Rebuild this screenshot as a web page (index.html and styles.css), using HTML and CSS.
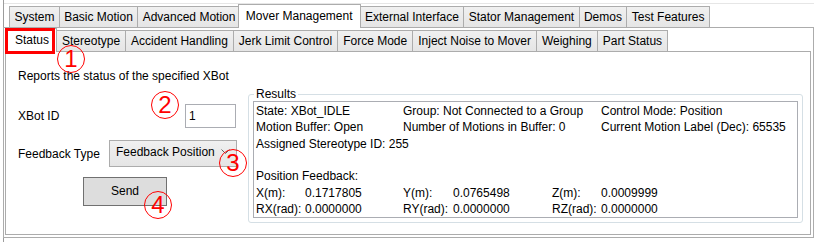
FILE: index.html
```html
<!DOCTYPE html>
<html lang="en">
<head>
  <meta charset="UTF-8" />
  <title>Mover Management - Status</title>
  <link rel="stylesheet" href="styles.css">
</head>
<body>
  <div class="frame">
    <div class="tabstrip main">
      <div class="tab">System</div>
      <div class="tab">Basic Motion</div>
      <div class="tab">Advanced Motion</div>
      <div class="tab active">Mover Management</div>
      <div class="tab">External Interface</div>
      <div class="tab">Stator Management</div>
      <div class="tab">Demos</div>
      <div class="tab">Test Features</div>
    </div>
    <div class="panel outer">
      <div class="tabstrip sub">
        <div class="tab active">Status</div>
        <div class="tab">Stereotype</div>
        <div class="tab">Accident Handling</div>
        <div class="tab">Jerk Limit Control</div>
        <div class="tab">Force Mode</div>
        <div class="tab">Inject Noise to Mover</div>
        <div class="tab">Weighing</div>
        <div class="tab">Part Status</div>
      </div>
      <div class="panel inner">
        <div class="controls">
          <div class="desc">Reports the status of the specified XBot</div>
          <div class="field id-row">
            <span>XBot ID</span>
            <div class="textbox">1</div>
          </div>
          <div class="field type-row">
            <span>Feedback Type</span>
            <div class="combo">
              <span>Feedback Position</span>
              <svg width="9" height="6" viewBox="0 0 9 6"><polyline points="0.5,0.5 4.5,4.5 8.5,0.5" fill="none" stroke="#606060" stroke-width="1"/></svg>
            </div>
          </div>
          <button class="send">Send</button>
        </div>
        <fieldset class="results">
          <legend>Results</legend>
          <div class="output">
            <div class="info">
              <span>State: XBot_IDLE</span>
              <span>Group: Not Connected to a Group</span>
              <span>Control Mode: Position</span>
              <span>Motion Buffer: Open</span>
              <span>Number of Motions in Buffer: 0</span>
              <span>Current Motion Label (Dec): 65535</span>
              <span>Assigned Stereotype ID: 255</span>
            </div>
            <div class="gap"></div>
            <div>Position Feedback:</div>
            <div class="coords">
              <span>X(m):</span><span>0.1717805</span>
              <span>Y(m):</span><span>0.0765498</span>
              <span>Z(m):</span><span>0.0009999</span>
              <span>RX(rad):</span><span>0.0000000</span>
              <span>RY(rad):</span><span>0.0000000</span>
              <span>RZ(rad):</span><span>0.0000000</span>
            </div>
          </div>
        </fieldset>
      </div>
    </div>

    <div class="highlight"></div>
    <div class="callout c1">1</div>
    <div class="callout c2">2</div>
    <div class="callout c3">3</div>
    <div class="callout c4">4</div>
  </div>
</body>
</html>
```

FILE: styles.css
```css
html, body {
  margin: 0;
  padding: 0;
  background: #fff;
  font-family: 'Liberation Sans', Arial, sans-serif;
  font-size: 12px;
  color: #000;
}
.frame {
  position: relative;
  width: 811px;
  height: 242px;
  margin-left: 3px;
  padding-top: 3px;
  box-sizing: border-box;
  border-left: 1px solid #9c9c9c;
}
.tabstrip {
  display: flex;
  align-items: flex-end;
  height: 23px;
  box-sizing: border-box;
}
.tabstrip.main {
  border-top: 1px solid #e6e6e6;
  padding-left: 5px;
  height: 24px;
}
.tabstrip.sub {
  padding-left: 4px;
}
.tab {
  height: 21px;
  line-height: 20px;
  padding: 0 5px;
  box-sizing: border-box;
  border: 1px solid #acacac;
  border-bottom: none;
  margin-right: -1px;
  background: linear-gradient(#f0f0f0, #e5e5e5);
  white-space: nowrap;
}
.main .tab {
  padding: 0 4.4px;
}
.tab.active,
.main .tab.active {
  position: relative;
  z-index: 2;
  height: 24px;
  line-height: 22px;
  margin: 0 -1px -1px -2px;
  padding: 0 7px;
  background: #fff;
}
.panel {
  border: 1px solid #acacac;
  box-sizing: border-box;
  background: #fff;
}
.panel.outer {
  width: 811px;
  height: 211px;
  margin-left: -1px;
  padding: 0 2px 2px 1px;
}
.panel.inner {
  display: flex;
  align-items: flex-start;
  width: 806px;
  height: 184px;
}
.controls {
  width: 242px;
  padding: 0 11px 0 12px;
  box-sizing: border-box;
}
.desc {
  margin-top: 16px;
  line-height: 16px;
}
.field {
  display: flex;
  align-items: center;
  justify-content: space-between;
}
.id-row {
  margin-top: 20px;
}
.type-row {
  margin-top: 12px;
}
.textbox {
  width: 51px;
  height: 24px;
  box-sizing: border-box;
  border: 1px solid #abadb3;
  padding: 3px 3px;
  margin-right: 1px;
  line-height: 16px;
}
.combo {
  display: flex;
  align-items: center;
  justify-content: space-between;
  width: 128px;
  height: 27px;
  box-sizing: border-box;
  border: 1px solid #acacac;
  background: linear-gradient(#f0f0f0, #e5e5e5);
  padding: 0 6px 4px 6px;
}
.send {
  display: block;
  width: 84px;
  height: 29px;
  margin: 10px 0 0 65px;
  border: 1px solid #707070;
  background: #dddddd;
  font-family: inherit;
  font-size: 12px;
  color: #000;
  padding: 0 0 2px 0;
}
.results {
  width: 555px;
  height: 136px;
  box-sizing: border-box;
  margin: 35px 0 0 0;
  padding: 0 4px 4px 4px;
  border: 1px solid #d5dfe5;
  border-radius: 3px;
}
.results legend {
  line-height: 14px;
  padding: 0 2px;
  margin-left: 1px;
}
.output {
  height: 117px;
  box-sizing: border-box;
  border: 1px solid #abadb3;
  padding: 1px 2px;
  line-height: 16.33px;
  white-space: nowrap;
}
.info {
  display: grid;
  grid-template-columns: 147px 198px auto;
}
.gap {
  height: 16.33px;
}
.coords {
  display: grid;
  grid-template-columns: 49px 98px 50px 99px 49px auto;
}
.highlight {
  position: absolute;
  left: 1px;
  top: 28px;
  width: 50px;
  height: 26px;
  box-sizing: border-box;
  border: 3px solid #ff0000;
  z-index: 5;
}
.callout {
  position: absolute;
  width: 28px;
  height: 28px;
  box-sizing: border-box;
  border: 1.5px solid #ff0000;
  border-radius: 50%;
  color: #ff0000;
  font-size: 24px;
  line-height: 25px;
  text-align: center;
  z-index: 6;
}
.c1 { left: 53px; top: 45px; }
.c2 { left: 147px; top: 91px; }
.c3 { left: 215px; top: 149px; }
.c4 { left: 140px; top: 191px; }
```
